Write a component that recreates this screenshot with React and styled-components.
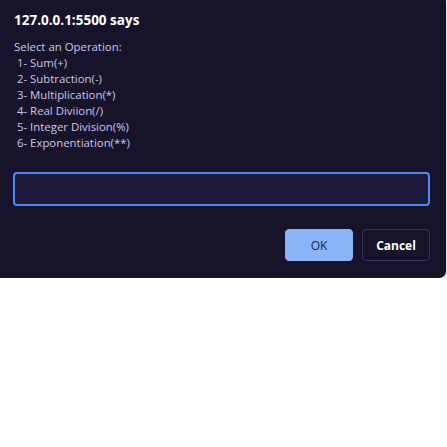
import React from 'react'
import styled, { createGlobalStyle } from 'styled-components'

const Global = createGlobalStyle`
  html, body {
    margin: 0;
    padding: 0;
    background: #ffffff;
  }
  body {
    font-family: "Open Sans", "Noto Sans", sans-serif;
  }
`

const lines = [
  'Select an Operation:',
  ' 1- Sum(+)',
  ' 2- Subtraction(-)',
  ' 3- Multiplication(*)',
  ' 4- Real Diviion(/)',
  ' 5- Integer Division(%)',
  ' 6- Exponentiation(**)',
]

function App() {
  return (
    <>
      <Global />
      <Dialog>
        <Title>127.0.0.1:5500 says</Title>
        <Message>{lines.join('\n')}</Message>
        <Input type="text" />
        <Actions>
          <Button primary>OK</Button>
          <Button>Cancel</Button>
        </Actions>
      </Dialog>
    </>
  )
}

///////////////////////////////////////////////////////////////////////////////////

const Dialog = styled.div`
  box-sizing: border-box;
  width: 446px;
  height: 278px;
  padding: 11px 16px 0 13px;
  background: #17132a;
  border-radius: 0 0 7px 0;
  box-shadow: 0 2px 6px rgba(0, 0, 0, 0.25);
  display: flex;
  flex-direction: column;
`

const Title = styled.div`
  color: #ffffff;
  font-size: 13.5px;
  font-weight: 700;
  line-height: 18px;
  padding-left: 1px;
`

const Message = styled.div`
  margin-top: 10px;
  padding-left: 1px;
  color: #c9c6ec;
  font-size: 11.4px;
  line-height: 16px;
  white-space: pre-wrap;
`

const Input = styled.input`
  box-sizing: border-box;
  margin-top: 21px;
  width: 417px;
  height: 34px;
  background: #1e1a3b;
  border: 2px solid #4a8af4;
  border-radius: 4px;
  outline: none;
`

const Actions = styled.div`
  margin-top: 23px;
  width: 417px;
  display: flex;
  justify-content: flex-end;
  gap: 9px;
`

const Button = styled.button`
  box-sizing: border-box;
  width: 68px;
  height: 32px;
  border-radius: 4px;
  font-family: "Open Sans", "Noto Sans", sans-serif;
  font-size: 12px;
  font-weight: ${p => (p.primary ? 400 : 700)};
  color: ${p => (p.primary ? '#20243a' : '#ffffff')};
  background: ${p => (p.primary ? '#8ab4f8' : '#17132a')};
  border: 1px solid ${p => (p.primary ? '#8ab4f8' : '#3a3160')};
  cursor: pointer;
`

export default App
